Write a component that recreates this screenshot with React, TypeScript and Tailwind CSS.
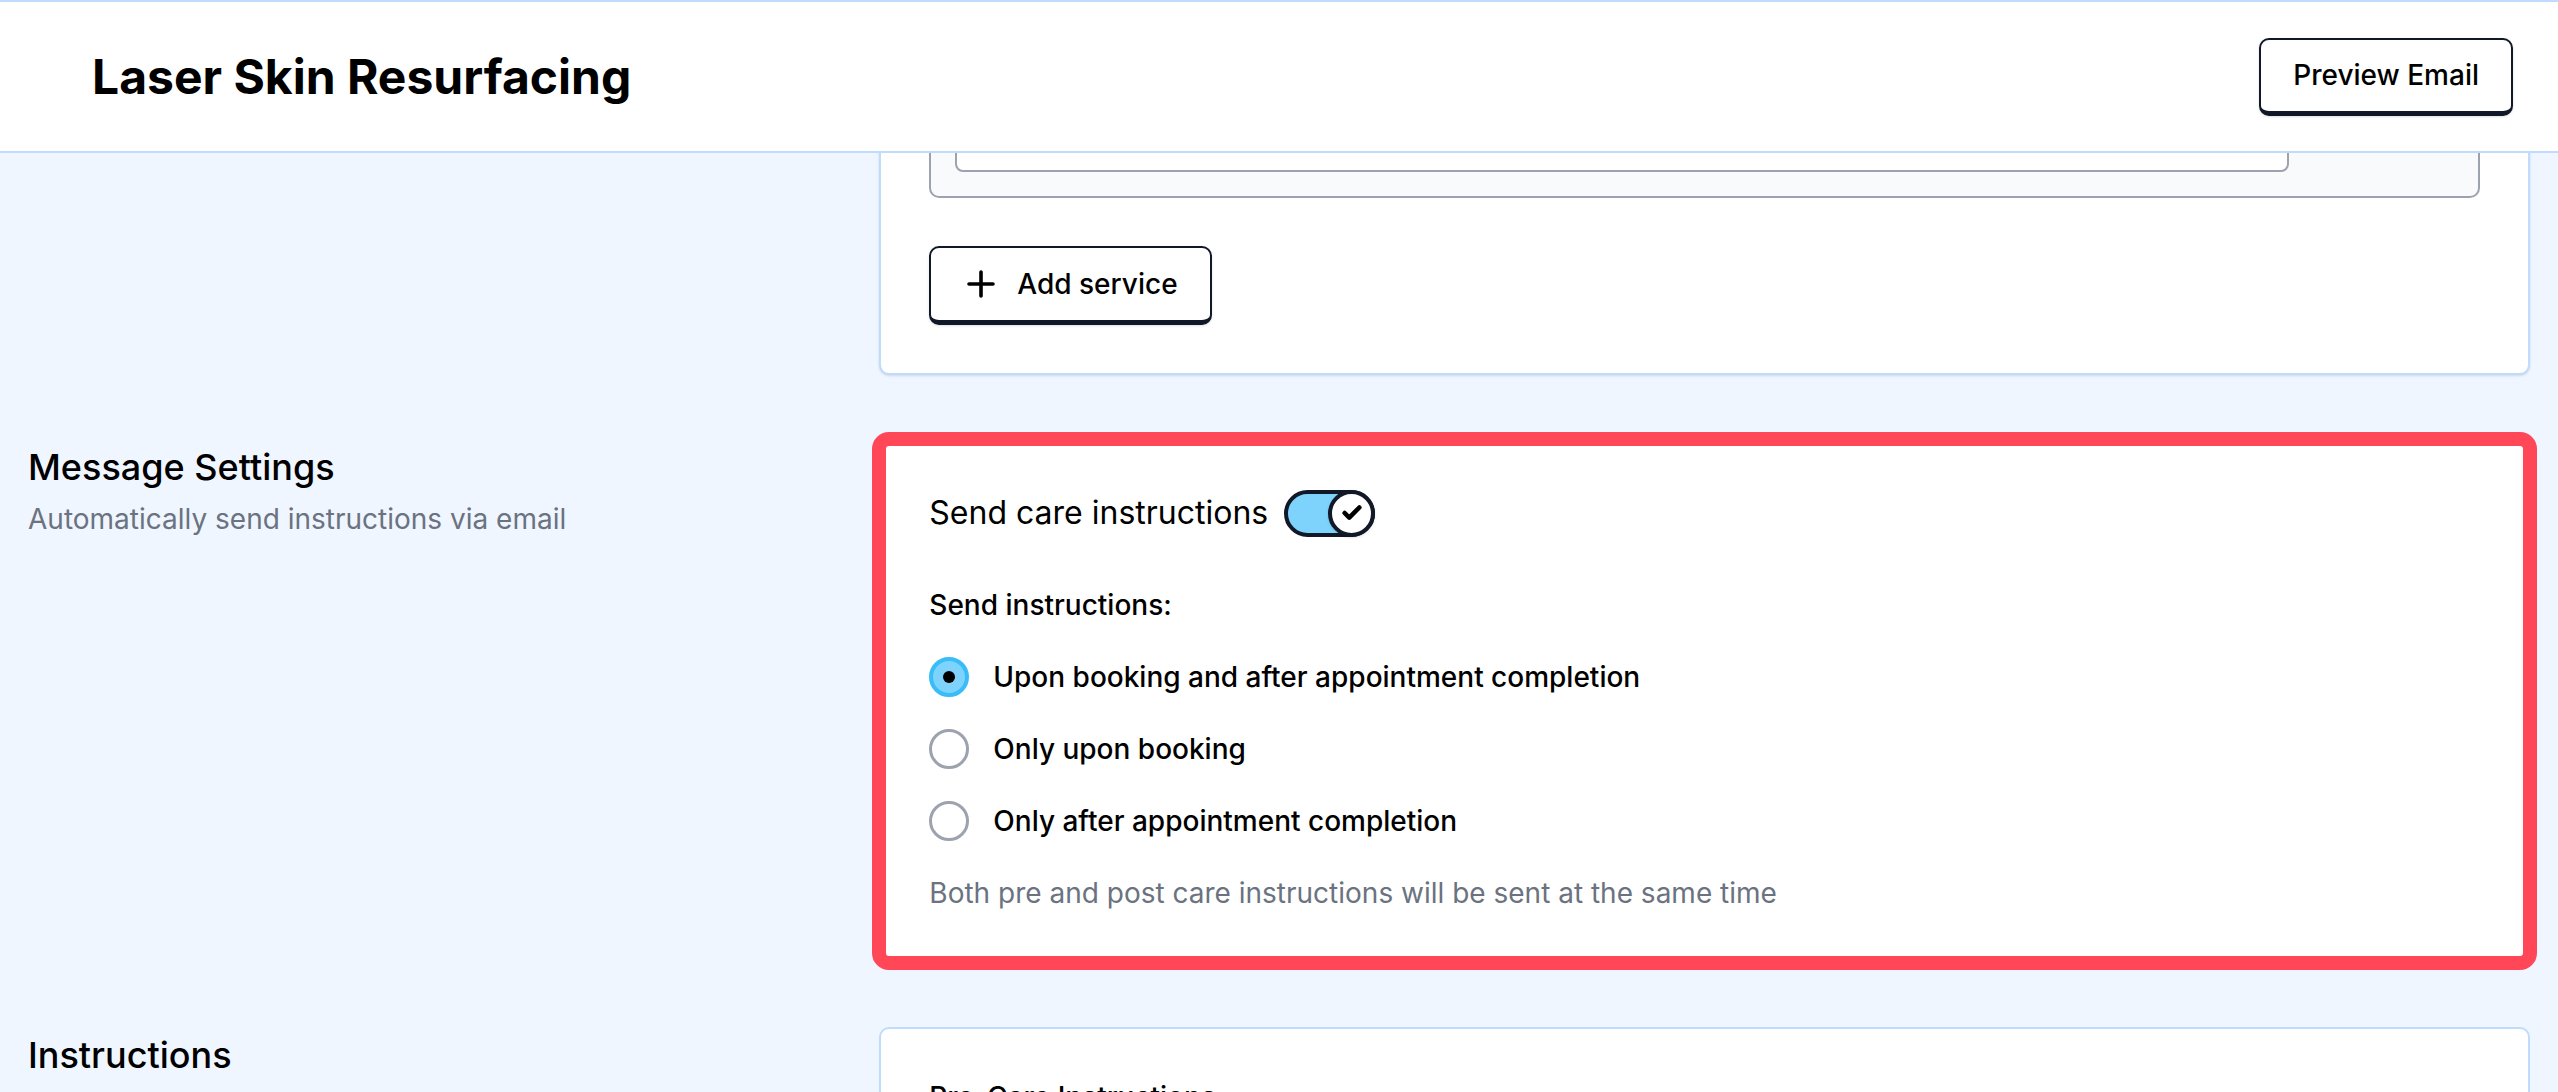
import { Check } from 'lucide-react'

const options = [
  { label: 'Upon booking and after appointment completion', selected: true },
  { label: 'Only upon booking', selected: false },
  { label: 'Only after appointment completion', selected: false },
]

function Radio({ selected }: { selected: boolean }) {
  if (selected) {
    return (
      <span className="flex size-[40px] shrink-0 items-center justify-center rounded-full border-[4px] border-[#38bdf8] bg-[#7dd3fc]">
        <span className="size-[12px] rounded-full bg-black" />
      </span>
    )
  }
  return <span className="size-[40px] shrink-0 rounded-full border-[3px] border-[#9ca3af] bg-white" />
}

function Toggle() {
  return (
    <span className="flex h-[47px] w-[91px] shrink-0 justify-end rounded-full border-[4px] border-[#111827] bg-[#7dd3fc]">
      <span className="-m-[4px] flex size-[47px] items-center justify-center rounded-full border-[4px] border-[#111827] bg-white shadow-sm">
        <Check size={22} strokeWidth={5} className="text-black" />
      </span>
    </span>
  )
}

export default function App() {
  return (
    <div className="flex h-[1092px] flex-col overflow-hidden bg-[#eff6ff] font-['Inter',sans-serif] text-black">
      {/* Sticky header */}
      <header className="flex h-[153px] shrink-0 items-center justify-between border-y-2 border-[#bfdbfe] bg-white pl-[92px] pr-[45px]">
        <h1 className="text-[48px] font-bold leading-[56px]">Laser Skin Resurfacing</h1>
        <button className="flex h-[78px] items-center rounded-[10px] border-2 border-b-[5px] border-[#111827] bg-white px-[32px] text-[28px] font-medium leading-[40px] shadow-sm">
          Preview Email
        </button>
      </header>

      {/* Scrolled content */}
      <main className="flex-1 overflow-hidden">
        <div className="-mt-[145px] grid grid-cols-3 gap-x-[52px] gap-y-[64px] px-[28px]">
          {/* Services (scrolled partly out of view) */}
          <div />
          <div className="col-span-2 rounded-[10px] border-2 border-[#bfdbfe] bg-white p-[48px] shadow-sm">
            <div className="rounded-[10px] border-2 border-[#9ca3af] bg-[#f9fafb] p-[24px]">
              <div className="h-[88px] w-[1334px] rounded-[8px] border-2 border-[#9ca3af] bg-white" />
            </div>
            <button className="mt-[48px] flex h-[79px] items-center gap-[22px] rounded-[10px] border-2 border-b-[5px] border-[#111827] bg-white pl-[36px] pr-[32px] text-[28px] font-medium leading-[40px] shadow-sm">
              <svg width="28" height="28" viewBox="0 0 28 28" fill="none" stroke="currentColor" strokeWidth="3.6" strokeLinecap="round">
                <path d="M14 2v24M2 14h24" />
              </svg>
              Add service
            </button>
          </div>

          {/* Message settings */}
          <div>
            <h2 className="text-[36px] font-medium leading-[56px]">Message Settings</h2>
            <p className="mt-[4px] text-[28px] leading-[40px] text-[#6b7280]">Automatically send instructions via email</p>
          </div>
          <div className="col-span-2 rounded-[10px] border-2 border-[#bfdbfe] bg-white p-[48px] outline-[14px] outline-offset-[-7px] outline-[#ff4757] outline-solid">
            <div className="flex h-[48px] items-center gap-[16px]">
              <span className="text-[32px] leading-[48px]">Send care instructions</span>
              <Toggle />
            </div>
            <p className="mt-[48px] text-[28px] font-medium leading-[40px]">Send instructions:</p>
            <div className="mt-[32px] flex flex-col gap-[32px]">
              {options.map((o) => (
                <label key={o.label} className="flex h-[40px] items-center gap-[24px] text-[28px] font-medium leading-[40px]">
                  <Radio selected={o.selected} />
                  {o.label}
                </label>
              ))}
            </div>
            <p className="mt-[32px] text-[28px] leading-[40px] text-[#6b7280]">
              Both pre and post care instructions will be sent at the same time
            </p>
          </div>

          {/* Instructions */}
          <div>
            <h2 className="text-[36px] font-medium leading-[56px]">Instructions</h2>
          </div>
          <div className="col-span-2 rounded-[10px] border-2 border-[#bfdbfe] bg-white p-[48px]">
            <p className="text-[28px] font-medium leading-[40px]">Pre-Care Instructions</p>
            <div className="mt-[24px] h-[300px]" />
          </div>
        </div>
      </main>
    </div>
  )
}
